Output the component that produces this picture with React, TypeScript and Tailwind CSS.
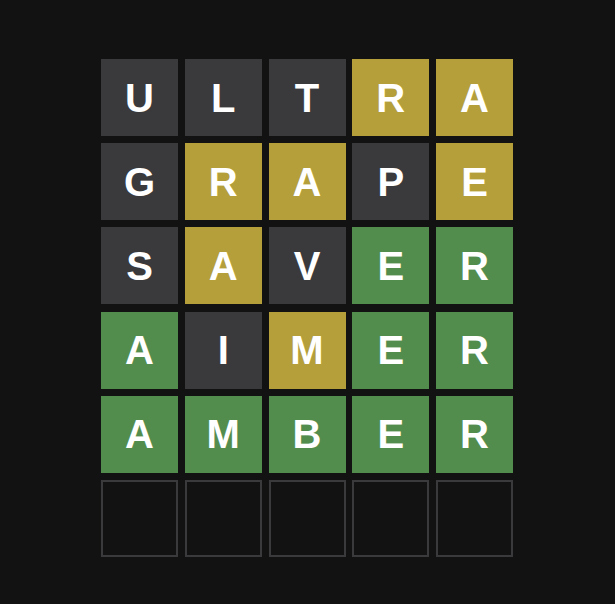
import React from "react";

type S = "g" | "y" | "d" | "e";
const rows: { l: string; s: S }[][] = [
  [["U","d"],["L","d"],["T","d"],["R","y"],["A","y"]],
  [["G","d"],["R","y"],["A","y"],["P","d"],["E","y"]],
  [["S","d"],["A","y"],["V","d"],["E","g"],["R","g"]],
  [["A","g"],["I","d"],["M","y"],["E","g"],["R","g"]],
  [["A","g"],["M","g"],["B","g"],["E","g"],["R","g"]],
  [["","e"],["","e"],["","e"],["","e"],["","e"]],
].map((r) => r.map(([l, s]) => ({ l, s: s as S })));

const cls: Record<S, string> = {
  g: "bg-[#538d4e]",
  y: "bg-[#b59f3b]",
  d: "bg-[#3a3a3c]",
  e: "border-2 border-[#3a3a3c]",
};

export default function App() {
  return (
    <div className="w-[615px] h-[604px] bg-[#121213] flex justify-start pl-[101px] pt-[59px]">
      <div className="grid grid-cols-5 w-[412px] gap-x-[6.75px] gap-y-[7.2px] auto-rows-[77px]">
        {rows.flat().map((t, i) => (
          <div
            key={i}
            className={`${cls[t.s]} flex items-center justify-center text-white font-bold text-[40px] leading-none`}
            style={{ fontFamily: '"Liberation Sans", Arial, sans-serif' }}
          >
            {t.l}
          </div>
        ))}
      </div>
    </div>
  );
}
